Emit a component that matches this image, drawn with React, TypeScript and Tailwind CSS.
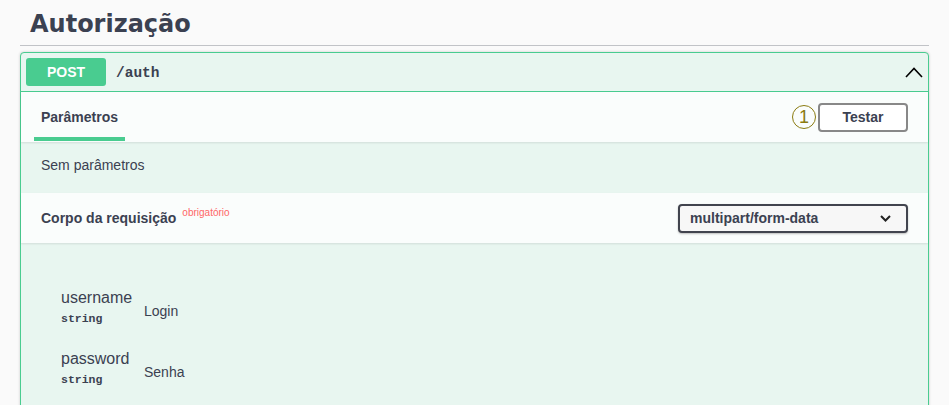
import React from "react";

export default function App() {
  const sans = { fontFamily: '"Liberation Sans", Arial, sans-serif' };
  const mono = { fontFamily: '"Liberation Mono", "Courier New", monospace' };
  return (
    <div className="min-h-[405px] bg-[#fafafa] px-5 text-[#3b4151] overflow-hidden" style={sans}>
      <h3
        className="pl-[10px] pt-[10px] pb-[7px] text-[24px] leading-[28px] font-bold border-b border-[#c1c3c7]"
        style={{ fontFamily: '"DejaVu Sans", Verdana, sans-serif' }}
      >
        Autorização
      </h3>
      <div className="mt-[6px] border border-[#49cc90] rounded-[4px] bg-[#e8f6f0] shadow-[0_0_3px_rgba(0,0,0,0.19)]">
        {/* summary */}
        <div className="flex items-center h-[39px] px-[5px] border-b border-[#49cc90]">
          <div className="w-[80px] h-[28px] rounded-[3px] bg-[#49cc90] text-white font-bold text-[14px] flex items-center justify-center">
            POST
          </div>
          <span className="ml-[10px] mt-[4px] font-bold text-[14.5px] text-[#3b4151]" style={mono}>
            /auth
          </span>
          <svg className="ml-auto" width="18" height="12" viewBox="0 0 18 12">
            <polyline points="1,11 9,2.5 17,11" fill="none" stroke="#000" strokeWidth="1.6" />
          </svg>
        </div>
        {/* params header */}
        <div className="h-[50px] bg-white/80 shadow-[0_1px_2px_rgba(0,0,0,0.1)] pl-[13px] pr-5 flex items-center justify-between">
          <div className="relative h-full flex items-center px-[7px]">
            <span className="font-bold text-[14px]">Parâmetros</span>
            <span className="absolute left-0 right-0 bottom-[1px] h-[4px] bg-[#49cc90]" />
          </div>
          <div className="flex items-center gap-[2px]">
            <div className="w-[24px] h-[24px] rounded-full border-[1.5px] border-[#8a7b10] text-[#8a7b10] text-[18px] leading-none flex items-center justify-center">
              1
            </div>
            <button className="w-[90px] h-[29px] border-2 border-[#888888] rounded-[4px] bg-white font-bold text-[14px] text-[#3b4151]">
              Testar
            </button>
          </div>
        </div>
        {/* no params */}
        <div className="h-[51px] px-5 pb-[5px] flex items-center text-[14px]">Sem parâmetros</div>
        {/* request body header */}
        <div className="h-[50px] bg-white/80 shadow-[0_1px_2px_rgba(0,0,0,0.1)] px-5 flex items-center justify-between">
          <div className="flex items-start">
            <span className="font-bold text-[14px] leading-[20px]">Corpo da requisição</span>
            <span className="ml-[6px] text-[10px] leading-[12px] text-[#ff6666] mt-[-1px]">obrigatório</span>
          </div>
          <div className="w-[230px] h-[29px] border-2 border-[#41444e] rounded-[4px] bg-[#f7f7f7] shadow-[0_1px_2px_rgba(0,0,0,0.25)] pl-[10px] pr-[15px] flex items-center justify-between">
            <span className="font-bold text-[14px]">multipart/form-data</span>
            <svg width="11" height="7" viewBox="0 0 11 7">
              <polyline points="1,1 5.5,5.5 10,1" fill="none" stroke="#222" strokeWidth="2" />
            </svg>
          </div>
        </div>
        {/* body */}
        <div className="pt-[46px] pl-[40px] pb-[40px] flex flex-col gap-[21px]">
          {[
            ["username", "Login"],
            ["password", "Senha"],
          ].map(([n, d]) => (
            <div key={n} className="flex items-center">
              <div className="w-[83px] flex flex-col">
                <span className="text-[16px] leading-[18px]">{n}</span>
                <span className="text-[11.5px] leading-[14px] pt-[5px] pb-[3px] font-bold" style={mono}>
                  string
                </span>
              </div>
              <div className="pt-[4px] text-[14px]">{d}</div>
            </div>
          ))}
        </div>
      </div>
    </div>
  );
}
